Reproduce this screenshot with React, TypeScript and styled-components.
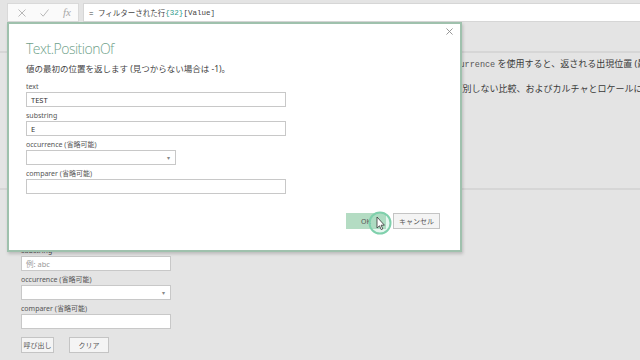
import React from "react";
import styled, { createGlobalStyle } from "styled-components";

const UI = `"Noto Sans", "Noto Sans CJK JP", sans-serif`;
const MONO = `"Liberation Mono", "Noto Sans CJK JP", monospace`;

const GlobalStyle = createGlobalStyle`
  html, body { margin: 0; padding: 0; background: #e4e4e4; }
  body { width: 640px; height: 360px; overflow: hidden; font-family: ${UI}; }
`;

const Page = styled.div`
  position: relative;
  width: 640px;
  height: 360px;
  display: flex;
  flex-direction: column;
  background: #e4e4e4;
  overflow: hidden;
`;

const FormulaBar = styled.div`
  height: 19px;
  margin-top: 3px;
  display: flex;
  gap: 4px;
  padding-left: 7px;
  flex-shrink: 0;
`;

const IconBox = styled.div`
  width: 72px;
  box-sizing: border-box;
  background: #fafafa;
  border: 1px solid #d9d9d9;
  display: flex;
  align-items: center;
  gap: 14px;
  padding-left: 10px;
  color: #b4b4b4;
`;

const Fx = styled.span`
  font-family: "Liberation Serif", serif;
  font-style: italic;
  font-size: 11px;
  color: #a8a8a8;
  line-height: 1;
`;

const FormulaInput = styled.div`
  flex: 1;
  background: #fff;
  border: 1px solid #d6d6d6;
  border-right: none;
  display: flex;
  align-items: center;
  padding-left: 5px;
  font-family: ${MONO};
  font-size: 7.5px;
  color: #444;
  white-space: nowrap;
`;

const Teal = styled.span`
  color: #2f9a8c;
`;

const Header = styled.div`
  height: 29px;
  flex-shrink: 0;
  border-bottom: 2px solid #d6d6d6;
`;

const Desc = styled.div`
  height: 137px;
  box-sizing: border-box;
  flex-shrink: 0;
  border-bottom: 2px solid #d6d6d6;
  padding: 5px 0 0 20px;
  display: flex;
  flex-direction: column;
  gap: 12px;
  overflow: hidden;
`;

const Para = styled.p<{ $indent?: number }>`
  margin: 0;
  padding-left: ${(p) => p.$indent ?? 0}px;
  font-family: ${UI};
  font-size: 9px;
  line-height: 12px;
  color: #3a3a3a;
  white-space: nowrap;
`;

const Code = styled.span`
  font-family: ${MONO};
  font-size: 8.5px;
  color: #555;
`;

const Form = styled.div`
  padding: 27px 0 0 21px;
  display: flex;
  flex-direction: column;
`;

const Field = styled.div<{ $gap: number }>`
  display: flex;
  flex-direction: column;
  margin-bottom: ${(p) => p.$gap}px;
`;

const Label = styled.div`
  font-family: ${UI};
  font-size: 7px;
  line-height: 10px;
  color: #555;
  white-space: nowrap;
`;

const Input = styled.div<{ $w: number; $placeholder?: boolean }>`
  width: ${(p) => p.$w}px;
  height: 15px;
  box-sizing: border-box;
  background: #fff;
  border: 1px solid #c8c8c8;
  display: flex;
  align-items: center;
  justify-content: space-between;
  padding: 0 5px 0 4px;
  font-family: ${UI};
  font-size: 7.5px;
  color: ${(p) => (p.$placeholder ? "#9a9a9a" : "#333")};
`;

const Caret = styled.span`
  font-size: 6px;
  color: #888;
`;

const BtnRow = styled.div<{ $end?: boolean }>`
  display: flex;
  gap: ${(p) => (p.$end ? 7 : 15)}px;
  justify-content: ${(p) => (p.$end ? "flex-end" : "flex-start")};
`;

const Button = styled.div<{ $w: number; $primary?: boolean }>`
  width: ${(p) => p.$w}px;
  height: 16px;
  box-sizing: border-box;
  display: flex;
  align-items: center;
  justify-content: center;
  background: ${(p) => (p.$primary ? "#b4dcc3" : "#f4f4f4")};
  border: 1px solid ${(p) => (p.$primary ? "#b4dcc3" : "#c4c4c4")};
  font-family: ${UI};
  font-size: 7px;
  color: #555;
`;

const Dialog = styled.div`
  position: absolute;
  left: 7px;
  top: 22px;
  width: 455px;
  height: 230px;
  box-sizing: border-box;
  background: #fff;
  border: 2px solid #9fc1ad;
  box-shadow: 1px 2px 3px rgba(0, 0, 0, 0.18);
  padding: 16px 20px 0 17px;
  display: flex;
  flex-direction: column;
`;

const Close = styled.div`
  position: absolute;
  top: 4px;
  right: 7px;
  width: 7px;
  height: 7px;
  display: flex;
`;

const Title = styled.h1`
  margin: 0;
  font-family: "Open Sans", "Noto Sans", sans-serif;
  font-weight: 300;
  font-size: 14px;
  letter-spacing: -0.5px;
  line-height: 18px;
  color: #6f9f8a;
`;

const Subtitle = styled.div`
  margin-top: 5px;
  margin-bottom: 7px;
  font-family: ${UI};
  font-size: 8.5px;
  line-height: 12px;
  color: #444;
  white-space: nowrap;
`;

const DialogButtons = styled(BtnRow)`
  margin-top: 19px;
`;

const Ring = styled.div`
  position: absolute;
  left: 368px;
  top: 211px;
  width: 24px;
  height: 24px;
  display: flex;
`;

function XIcon({ size = 8, color = "#b8b8b8" }: { size?: number; color?: string }) {
  return (
    <svg width={size} height={size} viewBox="0 0 8 8">
      <path d="M0.5 0.5 L7.5 7.5 M7.5 0.5 L0.5 7.5" stroke={color} strokeWidth="1" fill="none" />
    </svg>
  );
}

function Check() {
  return (
    <svg width="9" height="8" viewBox="0 0 9 8">
      <path d="M0.5 4.5 L3.2 7.2 L8.5 0.5" stroke="#b8b8b8" strokeWidth="1" fill="none" />
    </svg>
  );
}

export default function App() {
  return (
    <Page>
      <GlobalStyle />
      <FormulaBar>
        <IconBox>
          <XIcon />
          <Check />
          <Fx>fx</Fx>
        </IconBox>
        <FormulaInput>
          = フィルターされた行<Teal>{"{32}"}</Teal>[Value]
        </FormulaInput>
      </FormulaBar>

      <Header />
      <Desc>
        <Para>
          テキスト値の中で最初に出現した部分文字列の位置を返します。見つからない場合は、既定で省略可能な <Code>occurrence</Code> を使用すると、返される出現位置 (最初、最後、またはすべて) を指定できます。
        </Para>
        <Para $indent={3}>
          比較方法も指定できます。省略可能な比較子を指定すると、既定の序数比較の代わりに、大文字と小文字を区別しない比較、およびカルチャとロケールに対応した比較を実行できます。
        </Para>
      </Desc>
      <Form>
        <Field $gap={4}>
          <Label>text</Label>
          <Input $w={150} $placeholder>例: abc</Input>
        </Field>
        <Field $gap={4}>
          <Label>substring</Label>
          <Input $w={150} $placeholder>例: abc</Input>
        </Field>
        <Field $gap={4}>
          <Label>occurrence (省略可能)</Label>
          <Input $w={150}>
            <span />
            <Caret>▾</Caret>
          </Input>
        </Field>
        <Field $gap={8}>
          <Label>comparer (省略可能)</Label>
          <Input $w={150} />
        </Field>
        <BtnRow>
          <Button $w={33}>呼び出し</Button>
          <Button $w={40}>クリア</Button>
        </BtnRow>
      </Form>

      <Dialog>
        <Close>
          <XIcon size={7} color="#8a8a8a" />
        </Close>
        <Title>Text.PositionOf</Title>
        <Subtitle>値の最初の位置を返します (見つからない場合は -1)。</Subtitle>
        <Field $gap={4}>
          <Label>text</Label>
          <Input $w={260}>TEST</Input>
        </Field>
        <Field $gap={4}>
          <Label>substring</Label>
          <Input $w={260}>E</Input>
        </Field>
        <Field $gap={4}>
          <Label>occurrence (省略可能)</Label>
          <Input $w={150}>
            <span />
            <Caret>▾</Caret>
          </Input>
        </Field>
        <Field $gap={0}>
          <Label>comparer (省略可能)</Label>
          <Input $w={260} />
        </Field>
        <DialogButtons $end>
          <Button $w={40} $primary>OK</Button>
          <Button $w={47}>キャンセル</Button>
        </DialogButtons>
      </Dialog>

      <Ring>
        <svg width="24" height="24" viewBox="0 0 24 24">
          <circle cx="12" cy="12" r="10.5" fill="rgba(150,220,190,0.25)" stroke="#7fd0ac" strokeWidth="2" />
          <path
            d="M9 6 L9 17 L11.5 14.8 L13.2 18.6 L14.8 17.9 L13.1 14.2 L16.4 14.2 Z"
            fill="#fff"
            stroke="#333"
            strokeWidth="0.8"
            strokeLinejoin="round"
          />
        </svg>
      </Ring>
    </Page>
  );
}
